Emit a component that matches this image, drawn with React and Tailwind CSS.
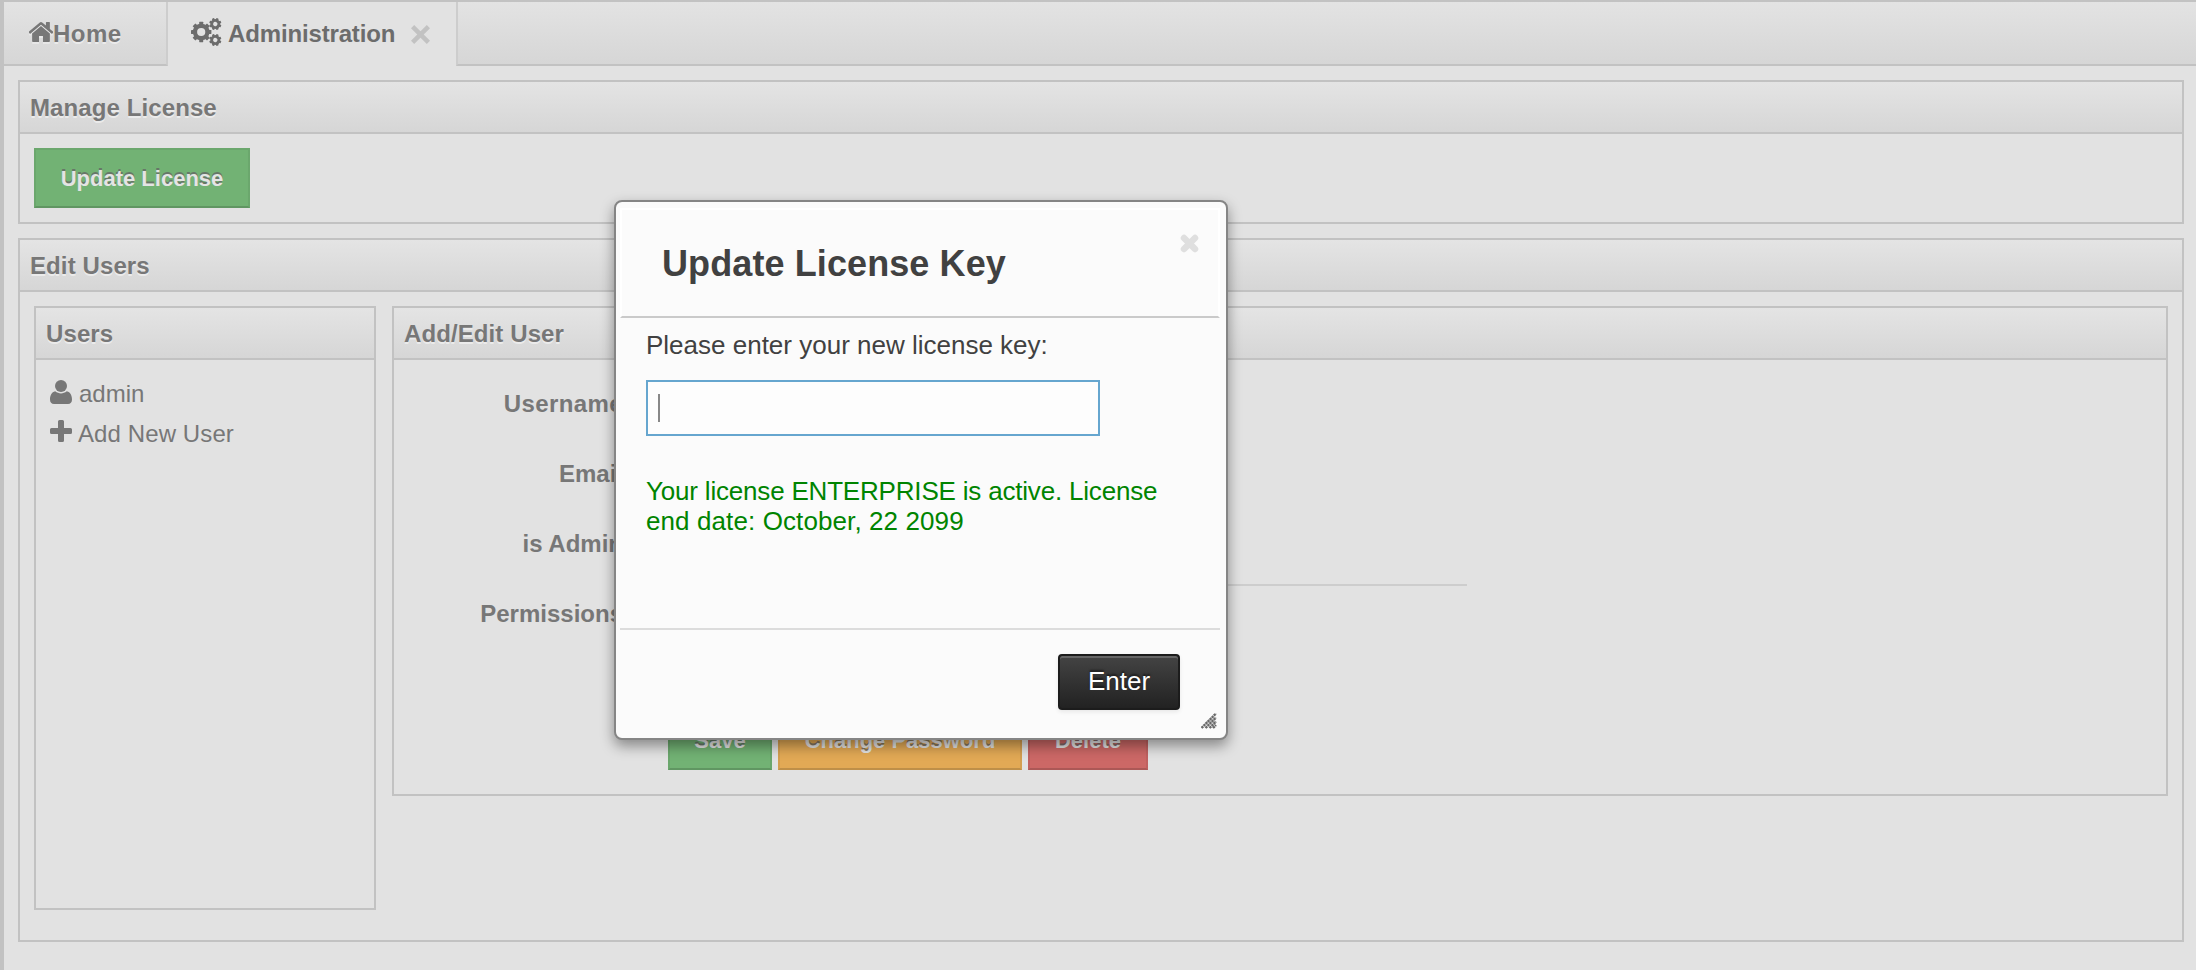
import React from "react";

const etched = "[text-shadow:0_2px_0_rgba(240,240,240,0.8)]";

function HomeIcon({ className }) {
  return (
    <svg viewBox="53 253 1558 1283" preserveAspectRatio="none" fill="currentColor" className={className}>
      <path d="M1408 992v480q0 26-19 45t-45 19h-384v-384h-256v384h-384q-26 0-45-19t-19-45v-480q0-1 .5-3t.5-3l575-474 575 474q1 2 1 6zm223-69l-62 74q-8 9-21 11h-3q-13 0-21-7l-692-577-692 577q-12 8-24 7-13-2-21-11l-62-74q-8-10-7-23.5t11-21.5l719-599q32-26 76-26t76 26l244 204v-195q0-14 9-23t23-9h192q14 0 23 9t9 23v408l219 182q10 8 11 21.5t-7 23.5z" />
    </svg>
  );
}

const TEETH = [0, 45, 90, 135, 180, 225, 270, 315];

function Gear({ cx, cy, radius, hole, tooth, turn }) {
  const rim = radius * 0.82;
  return (
    <g transform={`translate(${cx} ${cy}) rotate(${turn})`}>
      <circle r={(rim + hole) / 2} fill="none" stroke="currentColor" strokeWidth={rim - hole} />
      {TEETH.map((angle) => (
        <rect
          key={angle}
          x={-tooth / 2}
          y={-radius}
          width={tooth}
          height={radius - rim + 1}
          rx="0.4"
          fill="currentColor"
          transform={`rotate(${angle})`}
        />
      ))}
    </g>
  );
}

function CogsIcon({ className }) {
  return (
    <svg viewBox="0 0 31 28" className={className}>
      <Gear cx={10.2} cy={14} radius={10.2} hole={4.1} tooth={4} turn={0} />
      <Gear cx={24.3} cy={6} radius={6.1} hole={2.2} tooth={2.4} turn={22.5} />
      <Gear cx={24.3} cy={22} radius={6.1} hole={2.2} tooth={2.4} turn={22.5} />
    </svg>
  );
}

function UserIcon({ className }) {
  return (
    <svg viewBox="0 0 22 24" fill="currentColor" className={className}>
      <ellipse cx="11" cy="6" rx="6" ry="6" />
      <path d="M5.200 11.200C7 12.600 9 13.400 11 13.400s4-.8 5.800-2.200C20.500 12 22 15.500 22 19.500c0 2.800-1.500 4.500-4 4.500H4c-2.500 0-4-1.700-4-4.500 0-4 1.500-7.500 5.200-8.300z" />
    </svg>
  );
}

function PlusIcon({ className }) {
  return (
    <svg viewBox="0 0 22 22" fill="currentColor" className={className}>
      <path d="M9.500 0h3A1.500 1.500 0 0 1 14 1.500V8h6.500A1.500 1.500 0 0 1 22 9.500v3a1.500 1.500 0 0 1-1.500 1.500H14v6.500a1.500 1.500 0 0 1-1.500 1.500h-3A1.500 1.500 0 0 1 8 20.500V14H1.500A1.500 1.500 0 0 1 0 12.500v-3A1.500 1.500 0 0 1 1.500 8H8V1.500A1.500 1.500 0 0 1 9.500 0z" />
    </svg>
  );
}

function Panel({ title, className, children }) {
  return (
    <section className={`flex flex-col border-2 border-[#c2c2c2] ${className}`}>
      <h2 className={`flex h-[52px] shrink-0 items-center border-b-2 border-[#c2c2c2] bg-linear-to-b from-[#e4e4e4] to-[#d6d6d6] pl-[10px] pt-[2px] font-bold tracking-[0.1px] ${etched}`}>
        {title}
      </h2>
      {children}
    </section>
  );
}

function Button({ className, children }) {
  return (
    <button className={`flex h-[60px] items-center justify-center border-2 border-black/6 border-b-black/15 pt-[2px] text-[22px] font-bold text-[#e4e4e4] [text-shadow:0_-2px_0_rgba(100,100,100,0.75)] ${className}`}>
      {children}
    </button>
  );
}

function Field({ label, className = "" }) {
  return (
    <div className="flex h-[70px]">
      <div className={`w-[229px] text-right font-bold ${className}`}>{label}</div>
    </div>
  );
}

export default function App() {
  return (
    <div className="relative h-[970px] w-[2196px] overflow-hidden border-l-4 border-t-2 border-[#c2c2c2] bg-[#e2e2e2] font-['Liberation_Sans',Arial,sans-serif] text-[24px] leading-[28px] text-[#777]">
      <nav className="flex h-[64px]">
        <div className={`flex w-[164px] items-center border-b-2 border-r-2 border-b-[#c2c2c2] border-r-[#cdcdcd] bg-linear-to-b from-[#e3e3e3] to-[#d6d6d6] pl-[25px] font-bold ${etched}`}>
          <HomeIcon className="mb-[3px] h-[20px] w-[24px] drop-shadow-[0_2px_0_rgba(240,240,240,0.6)]" />
          <span className="mt-[2px] tracking-[0.5px]">Home</span>
        </div>
        <div className="flex w-[288px] items-center pl-[23px] font-bold text-[#6c6c6c]">
          <CogsIcon className="mb-[4px] h-[28px] w-[31px]" />
          <span className="ml-[6px] tracking-[-0.15px]">Administration</span>
          <svg viewBox="0 0 19 19" className="ml-[16px] h-[19px] w-[19px] stroke-[#c2c2c2]" strokeWidth="4.500">
            <path d="M1.600 1.600l15.800 15.800M17.400 1.600L1.600 17.400" />
          </svg>
        </div>
        <div className="flex-1 border-b-2 border-l-2 border-b-[#c2c2c2] border-l-[#cdcdcd] bg-linear-to-b from-[#e3e3e3] to-[#d6d6d6]" />
      </nav>

      <main className="flex flex-col gap-[14px] pl-[14px] pr-[12px] pt-[14px]">
        <Panel title="Manage License" className="h-[144px]">
          <div className="p-[14px]">
            <Button className="w-[216px] bg-[#72b274]">Update License</Button>
          </div>
        </Panel>

        <Panel title="Edit Users" className="h-[704px]">
          <div className="flex items-start gap-4 p-[14px]">
            <Panel title="Users" className="h-[604px] w-[342px]">
              <ul className="flex flex-col pl-[14px] pt-[14px]">
                <li className="flex h-10 items-center">
                  <UserIcon className="mb-[4px] h-[24px] w-[22px]" />
                  <span className="ml-[7px]">admin</span>
                </li>
                <li className="flex h-10 items-center">
                  <PlusIcon className="mb-[6px] h-[22px] w-[22px]" />
                  <span className="ml-[6px] tracking-[0.1px]">Add New User</span>
                </li>
              </ul>
            </Panel>

            <Panel title="Add/Edit User" className="h-[490px] flex-1">
              <div className="flex flex-col pt-[30px]">
                <Field label="Username" className="tracking-[0.4px]" />
                <Field label="Email" />
                <Field label="is Admin" />
                <div className="-mt-[16px] mb-[14px] ml-[253px] w-[820px] border-t-2 border-[#cdcdcd]" />
                <Field label="Permissions" />
                <div className="mt-[40px] flex gap-[6px] pl-[274px]">
                  <Button className="w-[104px] bg-[#72b274]">Save</Button>
                  <Button className="w-[244px] bg-[#e2a955]">Change Password</Button>
                  <Button className="w-[120px] bg-[#cc6866]">Delete</Button>
                </div>
              </div>
            </Panel>
          </div>
        </Panel>
      </main>

      <div
        role="dialog"
        className="absolute left-[610px] top-[198px] flex h-[540px] w-[614px] flex-col rounded-[8px] border-2 border-[#858585] bg-[#fbfbfb] pb-0 pl-[4px] pr-[6px] pt-[6px] text-[26px] leading-[30px] text-[#414141] shadow-[0_6px_14px_rgba(0,0,0,0.4)]"
      >
        <header className="flex h-[110px] justify-between border-2 border-white border-b-[#cacaca] pl-[40px] pr-[19px]">
          <h1 className="mt-[33px] text-[36px] font-bold leading-[42px] tracking-[0.1px]">Update License Key</h1>
          <svg viewBox="0 0 19 19" className="mt-[24px] h-[19px] w-[19px] stroke-[#dfdfdf]" strokeWidth="6.500" strokeLinecap="round">
            <path d="M4 4l11 11M15 4L4 15" />
          </svg>
        </header>
        <div className="flex flex-col px-[26px] pt-[12px]">
          <label>Please enter your new license key:</label>
          <div className="mt-[20px] flex h-[56px] w-[454px] items-center border-2 border-[#66a6cf] bg-[#fdfdfd] pl-[10px]">
            <span className="h-[28px] w-[2px] bg-[#888]" />
          </div>
          <p className="mt-[40px] w-[530px] text-[#008400]">
            <span className="tracking-[-0.19px]">Your license ENTERPRISE is active. License </span>
            <span className="tracking-[0.1px]">end date: October, 22 2099</span>
          </p>
        </div>
        <footer className="mt-auto flex h-[110px] items-start justify-end border-t-2 border-[#dcdcdc] pr-[40px] pt-[24px]">
          <button className="h-[56px] w-[122px] rounded-[4px] border-2 border-[#1c1c1c] bg-linear-to-b from-[#444] to-[#222] pb-[2px] text-[26px] text-white shadow-[inset_0_2px_0_#666,0_2px_4px_rgba(0,0,0,0.08)] [text-shadow:0_-2px_2px_rgba(0,0,0,0.5)]">
            Enter
          </button>
        </footer>
        <svg viewBox="0 0 16 16" className="absolute bottom-[9px] right-[9px] h-[16px] w-[16px] stroke-[#696969]" strokeWidth="2.400" strokeDasharray="2.400 0.500">
          <path d="M0.500 15L15 0.500M4.500 15L15 4.500M8.500 15L15 8.500M12 15l3-3" />
        </svg>
      </div>
    </div>
  );
}
